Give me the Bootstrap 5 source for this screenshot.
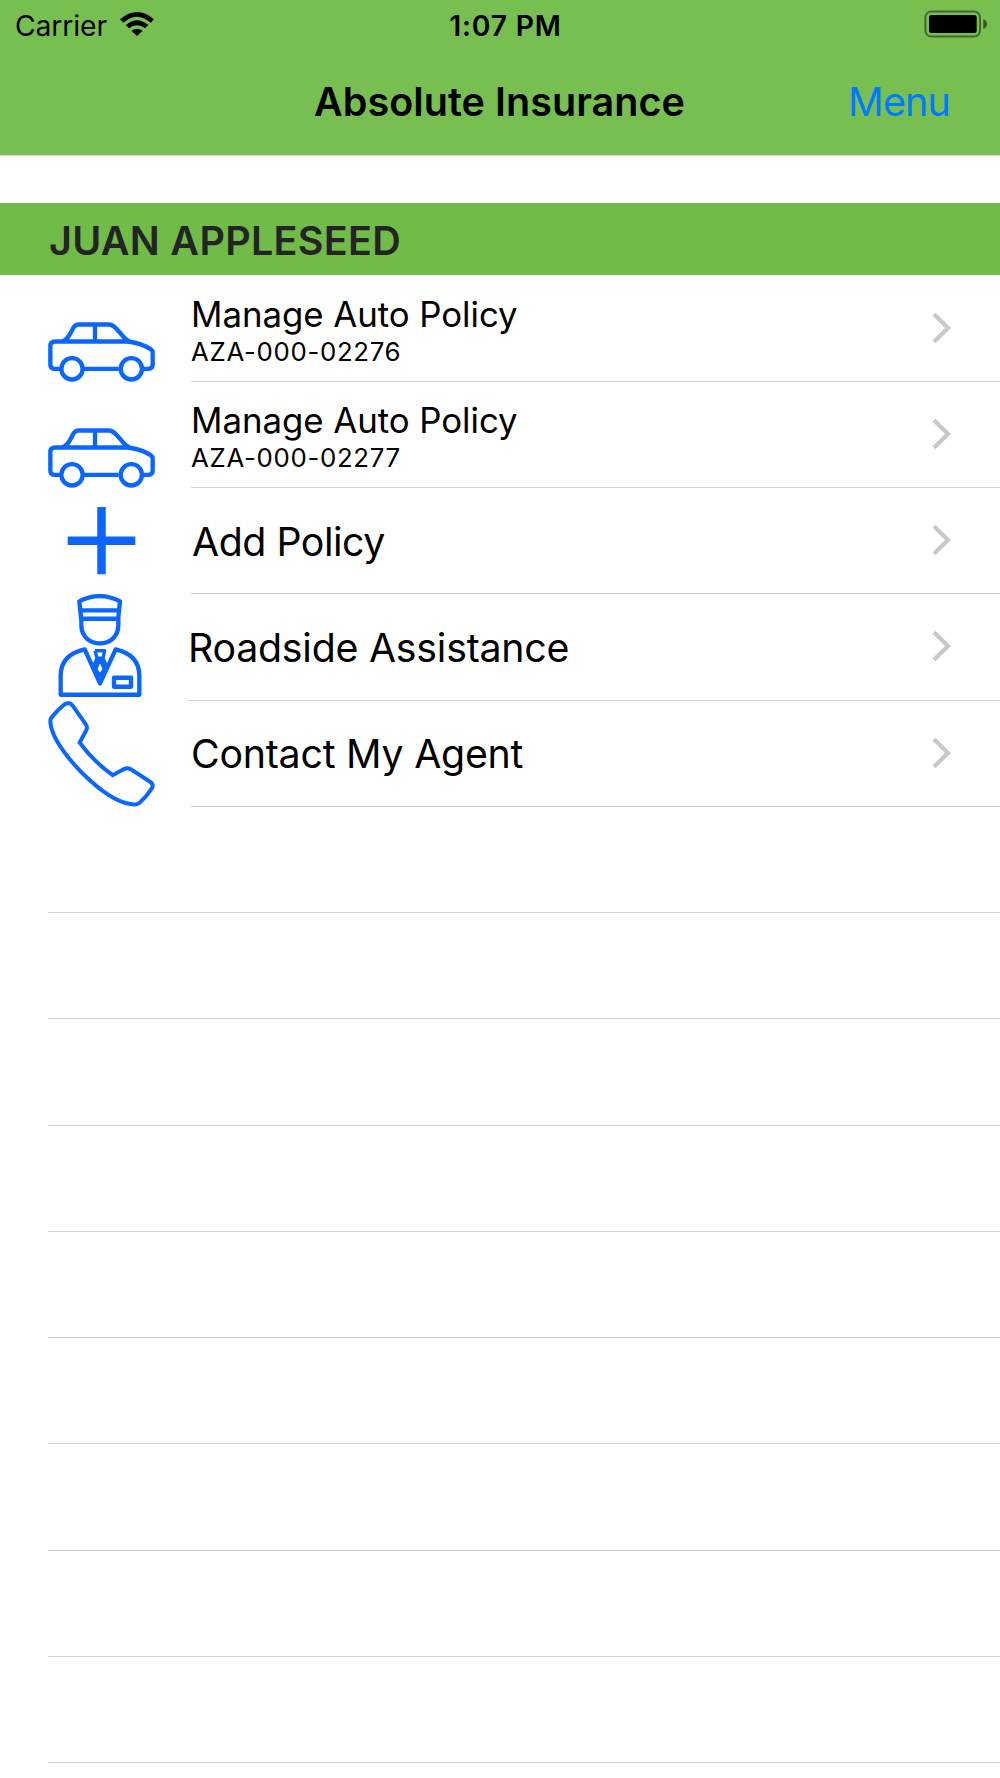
<!DOCTYPE html>
<html lang="en">
<head>
<meta charset="utf-8">
<meta name="viewport" content="width=device-width, initial-scale=1">
<title>Absolute Insurance</title>
<link rel="stylesheet" href="https://cdn.jsdelivr.net/npm/bootstrap@5.3.0/dist/css/bootstrap.min.css">
<style>
  body { font-family: Inter, "Liberation Sans", sans-serif; color: #000; height: 1778px; overflow: hidden; }
  svg { display: block; }
  .top-area { height: 156px; background: #78bf51; border-bottom: 1px solid #dcdce0; }
  .status-line { height: 51px; font-size: 28.3px; line-height: 53px; padding-left: 15px; padding-right: 13px; }
  .carrier { letter-spacing: -.1px; }
  .clock { letter-spacing: .8px; padding-left: 9px; }
  .wifi { margin: 12px 0 0 13px; }
  .battery { margin-top: 10px; }
  .title-line { height: 101px; font-size: 39.5px; line-height: 103px; padding-left: 49px; padding-right: 50px; letter-spacing: .05px; }
  .menu-link { color: #007aff; letter-spacing: -.87px; }
  .person-head { height: 72px; margin: 47px 0 .5px; padding: 4px 0 0 49px; background: #71bb48; color: #242424; font-size: 39.5px; line-height: 69px; letter-spacing: .3px; }
  .policy-row { height: 106.25px; padding-left: 48px; }
  .icon-cell { width: 143px; height: 106.25px; }
  .icon-cell.narrow { width: 140px; }
  .icon-cell svg { width: 107px; height: 106.25px; fill: none; stroke: #0a66ff; stroke-width: 13; stroke-linejoin: round; }
  .row-body { border-bottom: 1px solid #d0d0d3; padding-right: 49px; }
  .row-body svg { margin-bottom: 1px; }
  .row-label { font-size: 39.3px; line-height: 48px; letter-spacing: -.235px; padding-top: 2px; }
  .row-label.tight { letter-spacing: -.46px; padding-left: 1px; }
  .policy-label { font-size: 34.8px; line-height: 42px; letter-spacing: -.04px; }
  .policy-id { font-size: 25.8px; line-height: 33px; letter-spacing: .68px; }
  .policy-text { padding-bottom: 12px; }
</style>
</head>
<body class="bg-white">
<svg width="0" height="0" class="position-absolute">
  <symbol id="car" viewBox="54 -73.5 321 318.75">
    <path d="M90 205H73Q61 205 61 192V136Q61 123 76 123H292C325 126 347 136 362 146Q368 150 368 157V192Q368 205 356 205H342M162 205H266M98 122C112 117 116 108 122 97C130 83 132 72 147 72H236C252 72 258 84 270 97C281 109 286 118 300 123M195 72V122"/>
    <circle cx="126" cy="205" r="32"/><circle cx="304" cy="205" r="32"/>
  </symbol>
  <symbol id="chev" viewBox="0 0 19 32"><path d="M2 2.2L16 16L2 29.8" fill="none" stroke="#c7c7cc" stroke-width="4.2"/></symbol>
</svg>

<header class="top-area">
  <div class="status-line d-flex">
    <div class="d-flex col">
      <span class="carrier">Carrier</span>
      <svg class="wifi" width="34" height="24" viewBox="0 0 102 72"><path d="M0 22Q51 -22 102 22L92 32Q51 -4 10 32ZM17 39Q51 11 85 39L75 49Q51 30 27 49ZM34 56Q51 44 68 56L51 72Z"/></svg>
    </div>
    <span class="clock fw-semibold">1:07 PM</span>
    <div class="col d-flex justify-content-end">
      <svg class="battery" width="63" height="28" viewBox="0 0 63 28"><rect x="1.4" y="1.4" width="54.6" height="25.2" rx="6" fill="none" stroke="#000" stroke-opacity=".45" stroke-width="2"/><rect x="5" y="5" width="47.7" height="18" rx="2.5"/><path d="M59.3 9.3Q63 10.5 63 14T59.3 19Z" fill-opacity=".55"/></svg>
    </div>
  </div>
  <nav class="title-line d-flex">
    <div class="col"></div>
    <span class="fw-semibold">Absolute Insurance</span>
    <div class="col text-end"><a class="menu-link text-decoration-none" href="#">Menu</a></div>
  </nav>
</header>

<main>
  <div class="person-head fw-semibold">JUAN APPLESEED</div>

  <div class="policy-row d-flex">
    <div class="icon-cell flex-shrink-0"><svg><use href="#car"/></svg></div>
    <div class="row-body flex-grow-1 d-flex align-items-center justify-content-between">
      <div class="policy-text mt-3"><div class="policy-label">Manage Auto Policy</div><div class="policy-id">AZA-000-02276</div></div>
      <svg width="19" height="32"><use href="#chev"/></svg>
    </div>
  </div>
  <div class="policy-row d-flex">
    <div class="icon-cell flex-shrink-0"><svg><use href="#car"/></svg></div>
    <div class="row-body flex-grow-1 d-flex align-items-center justify-content-between">
      <div class="policy-text mt-3"><div class="policy-label">Manage Auto Policy</div><div class="policy-id">AZA-000-02277</div></div>
      <svg width="19" height="32"><use href="#chev"/></svg>
    </div>
  </div>
  <div class="policy-row d-flex">
    <div class="icon-cell flex-shrink-0"><svg viewBox="54 24 321 318.75"><path d="M214.5 81V283M113 182H316" stroke-width="25.5"/></svg></div>
    <div class="row-body flex-grow-1 d-flex align-items-center justify-content-between">
      <div class="row-label tight">Add Policy</div>
      <svg width="19" height="32"><use href="#chev"/></svg>
    </div>
  </div>
  <div class="policy-row d-flex">
    <div class="icon-cell narrow flex-shrink-0"><svg viewBox="54 42.75 321 318.75">
      <path d="M154 123L148 65Q209 33 270 65L264 123M151 92H267M154 117H264M154 117V136C154 209 265 209 265 136V117"/>
      <path d="M164 209C119 219 92 245 92 288V345H328V288C328 245 301 219 257 209L210 311Z"/>
      <path d="M195 213H224L219 235L231 264M195 213L201 235L189 264M201 235H219M210 238L197 268L210 288L223 268Z" stroke-width="10"/>
      <path d="M252 294H303V321H252Z"/>
    </svg></div>
    <div class="row-body flex-grow-1 d-flex align-items-center justify-content-between">
      <div class="row-label">Roadside Assistance</div>
      <svg width="19" height="32"><use href="#chev"/></svg>
    </div>
  </div>
  <div class="policy-row d-flex">
    <div class="icon-cell flex-shrink-0"><svg viewBox="54 31.5 321 318.75"><path stroke-width="12" stroke-linejoin="miter" d="M67 78Q84 57 103 42Q118 33 127 44L167 101Q173 109 169 119L149 156C174 191 212 228 248 254L281 236Q292 230 302 236L359 273Q372 281 366 293Q350 318 329 337Q323 342 315 342C265 341 217 304 177 267C132 226 61 146 61 91Q61 84 67 78Z"/></svg></div>
    <div class="row-body flex-grow-1 d-flex align-items-center justify-content-between">
      <div class="row-label">Contact My Agent</div>
      <svg width="19" height="32"><use href="#chev"/></svg>
    </div>
  </div>

  <div class="policy-row d-flex"><div class="row-body flex-grow-1"></div></div>
  <div class="policy-row d-flex"><div class="row-body flex-grow-1"></div></div>
  <div class="policy-row d-flex"><div class="row-body flex-grow-1"></div></div>
  <div class="policy-row d-flex"><div class="row-body flex-grow-1"></div></div>
  <div class="policy-row d-flex"><div class="row-body flex-grow-1"></div></div>
  <div class="policy-row d-flex"><div class="row-body flex-grow-1"></div></div>
  <div class="policy-row d-flex"><div class="row-body flex-grow-1"></div></div>
  <div class="policy-row d-flex"><div class="row-body flex-grow-1"></div></div>
  <div class="policy-row d-flex"><div class="row-body flex-grow-1"></div></div>
</main>
<script src="https://cdn.jsdelivr.net/npm/bootstrap@5.3.0/dist/js/bootstrap.bundle.min.js"></script>
</body>
</html>
